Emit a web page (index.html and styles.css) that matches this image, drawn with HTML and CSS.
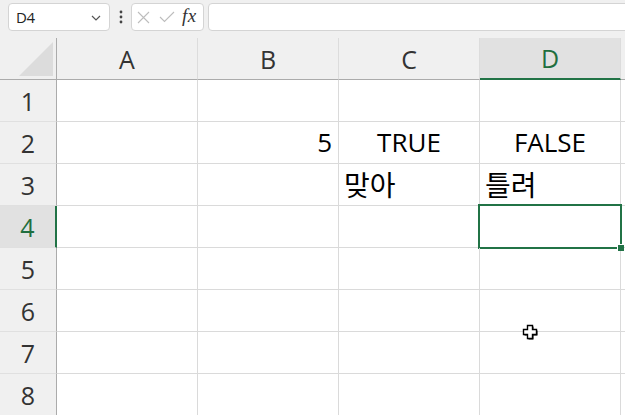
FILE: index.html
```html
<!DOCTYPE html>
<html lang="ko">
<head>
<meta charset="utf-8">
<title>Sheet</title>
<link rel="stylesheet" href="styles.css">
</head>
<body>
<div class="toolbar">
  <div class="namebox">
    <span class="cellref">D4</span>
    <svg class="chev" width="10" height="6" viewBox="0 0 10 6"><path d="M1 1 L5 5 L9 1" fill="none" stroke="#555" stroke-width="1.2"/></svg>
  </div>
  <div class="dots">
    <svg width="4" height="14" viewBox="0 0 4 14"><circle cx="2" cy="2" r="1.4" fill="#444"/><circle cx="2" cy="7" r="1.4" fill="#444"/><circle cx="2" cy="12" r="1.4" fill="#444"/></svg>
  </div>
  <div class="fxbox">
    <svg class="ico" width="13" height="13" viewBox="0 0 13 13"><path d="M1 1 L12 12 M12 1 L1 12" stroke="#bdbdbd" stroke-width="1.1" fill="none"/></svg>
    <svg class="ico check" width="16" height="12" viewBox="0 0 16 12"><path d="M1 6 L5.5 10.5 L15 1" stroke="#bdbdbd" stroke-width="1.1" fill="none"/></svg>
    <span class="fx">fx</span>
  </div>
  <div class="formula"></div>
</div>

<div class="sheet">
  <div class="corner"><svg width="36" height="36" viewBox="0 0 36 36"><path d="M35 1 L35 35 L1 35 Z" fill="#dcdcdc"/></svg></div>
  <div class="colhead">A</div>
  <div class="colhead">B</div>
  <div class="colhead">C</div>
  <div class="colhead sel">D</div>
  <div class="colhead"></div>

  <div class="rowhead">1</div>
  <div class="cell"></div><div class="cell"></div><div class="cell"></div><div class="cell"></div><div class="cell"></div>

  <div class="rowhead">2</div>
  <div class="cell"></div><div class="cell num">5</div><div class="cell center">TRUE</div><div class="cell center">FALSE</div><div class="cell"></div>

  <div class="rowhead">3</div>
  <div class="cell"></div><div class="cell"></div><div class="cell kr">맞아</div><div class="cell kr">틀려</div><div class="cell"></div>

  <div class="rowhead sel">4</div>
  <div class="cell"></div><div class="cell"></div><div class="cell"></div><div class="cell active"></div><div class="cell"></div>

  <div class="rowhead">5</div>
  <div class="cell"></div><div class="cell"></div><div class="cell"></div><div class="cell"></div><div class="cell"></div>

  <div class="rowhead">6</div>
  <div class="cell"></div><div class="cell"></div><div class="cell"></div><div class="cell"></div><div class="cell"></div>

  <div class="rowhead">7</div>
  <div class="cell"></div><div class="cell"></div><div class="cell"></div><div class="cell"></div><div class="cell"></div>

  <div class="rowhead">8</div>
  <div class="cell"></div><div class="cell"></div><div class="cell"></div><div class="cell"></div><div class="cell"></div>
</div>

<svg class="cursor" width="16" height="16" viewBox="0 0 16 16">
  <path d="M5.5 1.5 H10.5 V5.5 H14.5 V10.5 H10.5 V14.5 H5.5 V10.5 H1.5 V5.5 H5.5 Z" fill="#000" transform="translate(1,1)"/>
  <path d="M5.5 1.5 H10.5 V5.5 H14.5 V10.5 H10.5 V14.5 H5.5 V10.5 H1.5 V5.5 H5.5 Z" fill="#fff" stroke="#000" stroke-width="1.4"/>
</svg>
</body>
</html>
```

FILE: styles.css
```css
html, body {
  margin: 0;
  padding: 0;
  background: #ffffff;
  overflow: hidden;
}
body {
  width: 625px;
  height: 415px;
  font-family: "Open Sans", "Noto Sans", "Noto Sans CJK KR", sans-serif;
  color: #000;
  position: relative;
}

/* toolbar */
.toolbar {
  height: 38px;
  box-sizing: border-box;
  padding: 3px 0 0 8px;
  background: #f0f0f0;
  display: flex;
  align-items: flex-start;
}
.namebox {
  width: 102px;
  height: 28px;
  box-sizing: border-box;
  border: 1px solid #d4d4d4;
  border-radius: 4px;
  background: #fff;
  display: flex;
  align-items: center;
  justify-content: space-between;
  padding: 0 8px 0 7px;
}
.cellref {
  font-family: "Open Sans", sans-serif;
  font-size: 15px;
  color: #222;
  letter-spacing: -0.3px;
}
.chev { margin-top: 1px; }
.dots {
  width: 21px;
  height: 28px;
  display: flex;
  align-items: center;
  justify-content: center;
}
.fxbox {
  width: 73px;
  height: 28px;
  box-sizing: border-box;
  border: 1px solid #d4d4d4;
  border-radius: 4px;
  background: #fff;
  display: flex;
  align-items: center;
  padding: 0 0 0 5px;
  gap: 8px;
}
.check { margin-left: 1px; }
.fx {
  font-family: "Liberation Serif", "DejaVu Serif", serif;
  font-style: italic;
  font-size: 19px;
  color: #333;
  margin-left: -1px;
  margin-top: -2px;
  letter-spacing: 0.5px;
}
.formula {
  flex: 1;
  height: 28px;
  margin-left: 4px;
  margin-right: -10px;
  box-sizing: border-box;
  border: 1px solid #d4d4d4;
  border-radius: 4px;
  background: #fff;
}

/* grid */
.sheet {
  display: grid;
  grid-template-columns: 57px repeat(4, 141px) 1fr;
  grid-auto-rows: 42px;
}
.sheet > div {
  box-sizing: border-box;
}
.corner {
  background: #f0f0f0;
  border-right: 1px solid #ababab;
  border-bottom: 1px solid #ababab;
  display: flex;
  align-items: flex-end;
  justify-content: flex-end;
  padding: 0 2px 2px 0;
}
.colhead {
  background: #f0f0f0;
  border-right: 1px solid #dcdcdc;
  border-bottom: 1px solid #ababab;
  display: flex;
  align-items: center;
  justify-content: center;
  font-size: 25px;
  color: #333;
}
.colhead.sel {
  background: #e1e1e1;
  color: #1f6f3f;
  border-bottom: 2px solid #217346;
}
.rowhead {
  background: #f0f0f0;
  border-right: 1px solid #ababab;
  border-bottom: 1px solid #e0e0e0;
  display: flex;
  align-items: center;
  justify-content: center;
  font-size: 25px;
  color: #333;
  padding-top: 0;
}
.rowhead.sel {
  background: #e1e1e1;
  color: #1f6f3f;
  border-right: 2px solid #217346;
}
.cell {
  border-right: 1px solid #dadada;
  border-bottom: 1px solid #dadada;
  display: flex;
  align-items: flex-end;
  font-size: 26px;
  padding: 0 6px 3px 6px;
  white-space: nowrap;
  position: relative;
}
.cell.num { justify-content: flex-end; }
.cell.center { justify-content: center; }
.cell.kr {
  font-family: "Noto Sans CJK KR", sans-serif;
  font-size: 28px;
  padding-bottom: 1px;
  padding-left: 5px;
}
.cell.active::after {
  content: "";
  position: absolute;
  left: -2px;
  top: -2px;
  right: -2px;
  bottom: -2px;
  border: 2px solid #217346;
}
.cell.active::before {
  content: "";
  position: absolute;
  right: -4px;
  bottom: -4px;
  width: 6px;
  height: 6px;
  background: #217346;
  border-left: 1px solid #fff;
  border-top: 1px solid #fff;
  z-index: 2;
}

.cursor {
  position: absolute;
  left: 522px;
  top: 324px;
}
```
